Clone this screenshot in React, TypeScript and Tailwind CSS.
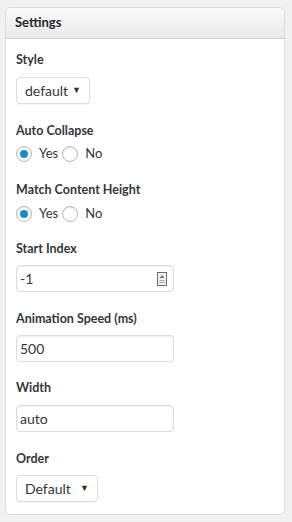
import React from "react";

const font = { fontFamily: "Lato, 'Noto Sans', sans-serif" };

function Label({ children, mb }: { children: React.ReactNode; mb: string }) {
  return <div className={`h-[18px] pt-[2px] leading-[16px] text-[12.5px] text-[#32373c] font-bold ${mb}`}>{children}</div>;
}

function Select({ value, width }: { value: string; width: string }) {
  return (
    <div className={`${width} h-[27px] border border-[#ddd] rounded-[4px] bg-white flex items-center justify-between pl-[8px] pr-[8px] shadow-[0_1px_1px_rgba(0,0,0,0.04)]`}>
      <span className="text-[14px] text-[#32373c]">{value}</span>
      <span className="text-[9px] text-[#333] leading-none mt-[-3px]">▼</span>
    </div>
  );
}

function Input({ value, spinner }: { value: string; spinner?: boolean }) {
  return (
    <div className="w-[158px] h-[27px] border border-[#ddd] rounded-[4px] bg-white flex items-center justify-between pl-[3px] pr-[6px] shadow-[inset_0_1px_2px_rgba(0,0,0,0.07)]">
      <span className="text-[14px] text-[#32373c]">{value}</span>
      {spinner && (
        <svg width="10" height="14" viewBox="0 0 10 14">
          <rect x="0.5" y="0.5" width="9" height="13" fill="#f0f0f0" stroke="#6f6f6f" />
          <path d="M5 3 L7.5 6 H2.5 Z" fill="#777" />
          <rect x="2.5" y="8" width="5" height="1" fill="#aaa" />
          <rect x="2.5" y="10" width="5" height="1" fill="#aaa" />
        </svg>
      )}
    </div>
  );
}

function Radio({ checked, label }: { checked?: boolean; label: string }) {
  return (
    <div className="flex items-center">
      <span className="w-[16px] h-[16px] rounded-full border border-[#b4b9be] bg-white flex items-center justify-center shadow-[inset_0_1px_2px_rgba(0,0,0,0.1)]">
        {checked && <span className="w-[8px] h-[8px] rounded-full bg-[#1e8cbe]" />}
      </span>
      <span className="ml-[7px] mr-[4px] text-[13px] text-[#32373c]">{label}</span>
    </div>
  );
}

export default function App() {
  return (
    <div className="w-[292px] h-[522px] bg-[#f1f1f1] pt-[7px] pl-[5px]" style={font}>
      <div className="w-[280px] h-[508px] bg-white border border-[#dcdcdc] rounded-[6px] overflow-hidden">
        <div className="h-[31px] border-b border-[#cfcfcf] bg-gradient-to-b from-[#fafafa] to-[#e9e9e9] flex items-center pl-[9px]">
          <span className="text-[13px] font-bold text-[#23282d]">Settings</span>
        </div>
        <div className="pl-[10px] pt-[11px] flex flex-col">
          <div>
            <Label mb="mb-[9px]">Style</Label>
            <Select value="default" width="w-[74px]" />
          </div>
          <div className="mt-[17px]">
            <Label mb="mb-[7px]">Auto Collapse</Label>
            <div className="flex items-center h-[16px]">
              <Radio checked label="Yes" />
              <Radio label="No" />
            </div>
          </div>
          <div className="mt-[18px]">
            <Label mb="mb-[8px]">Match Content Height</Label>
            <div className="flex items-center h-[16px]">
              <Radio checked label="Yes" />
              <Radio label="No" />
            </div>
          </div>
          <div className="mt-[17px]">
            <Label mb="mb-[8px]">Start Index</Label>
            <Input value="-1" spinner />
          </div>
          <div className="mt-[17px]">
            <Label mb="mb-[8px]">Animation Speed (ms)</Label>
            <Input value="500" />
          </div>
          <div className="mt-[16px]">
            <Label mb="mb-[9px]">Width</Label>
            <Input value="auto" />
          </div>
          <div className="mt-[17px]">
            <Label mb="mb-[8px]">Order</Label>
            <Select value="Default" width="w-[82px]" />
          </div>
        </div>
      </div>
    </div>
  );
}
